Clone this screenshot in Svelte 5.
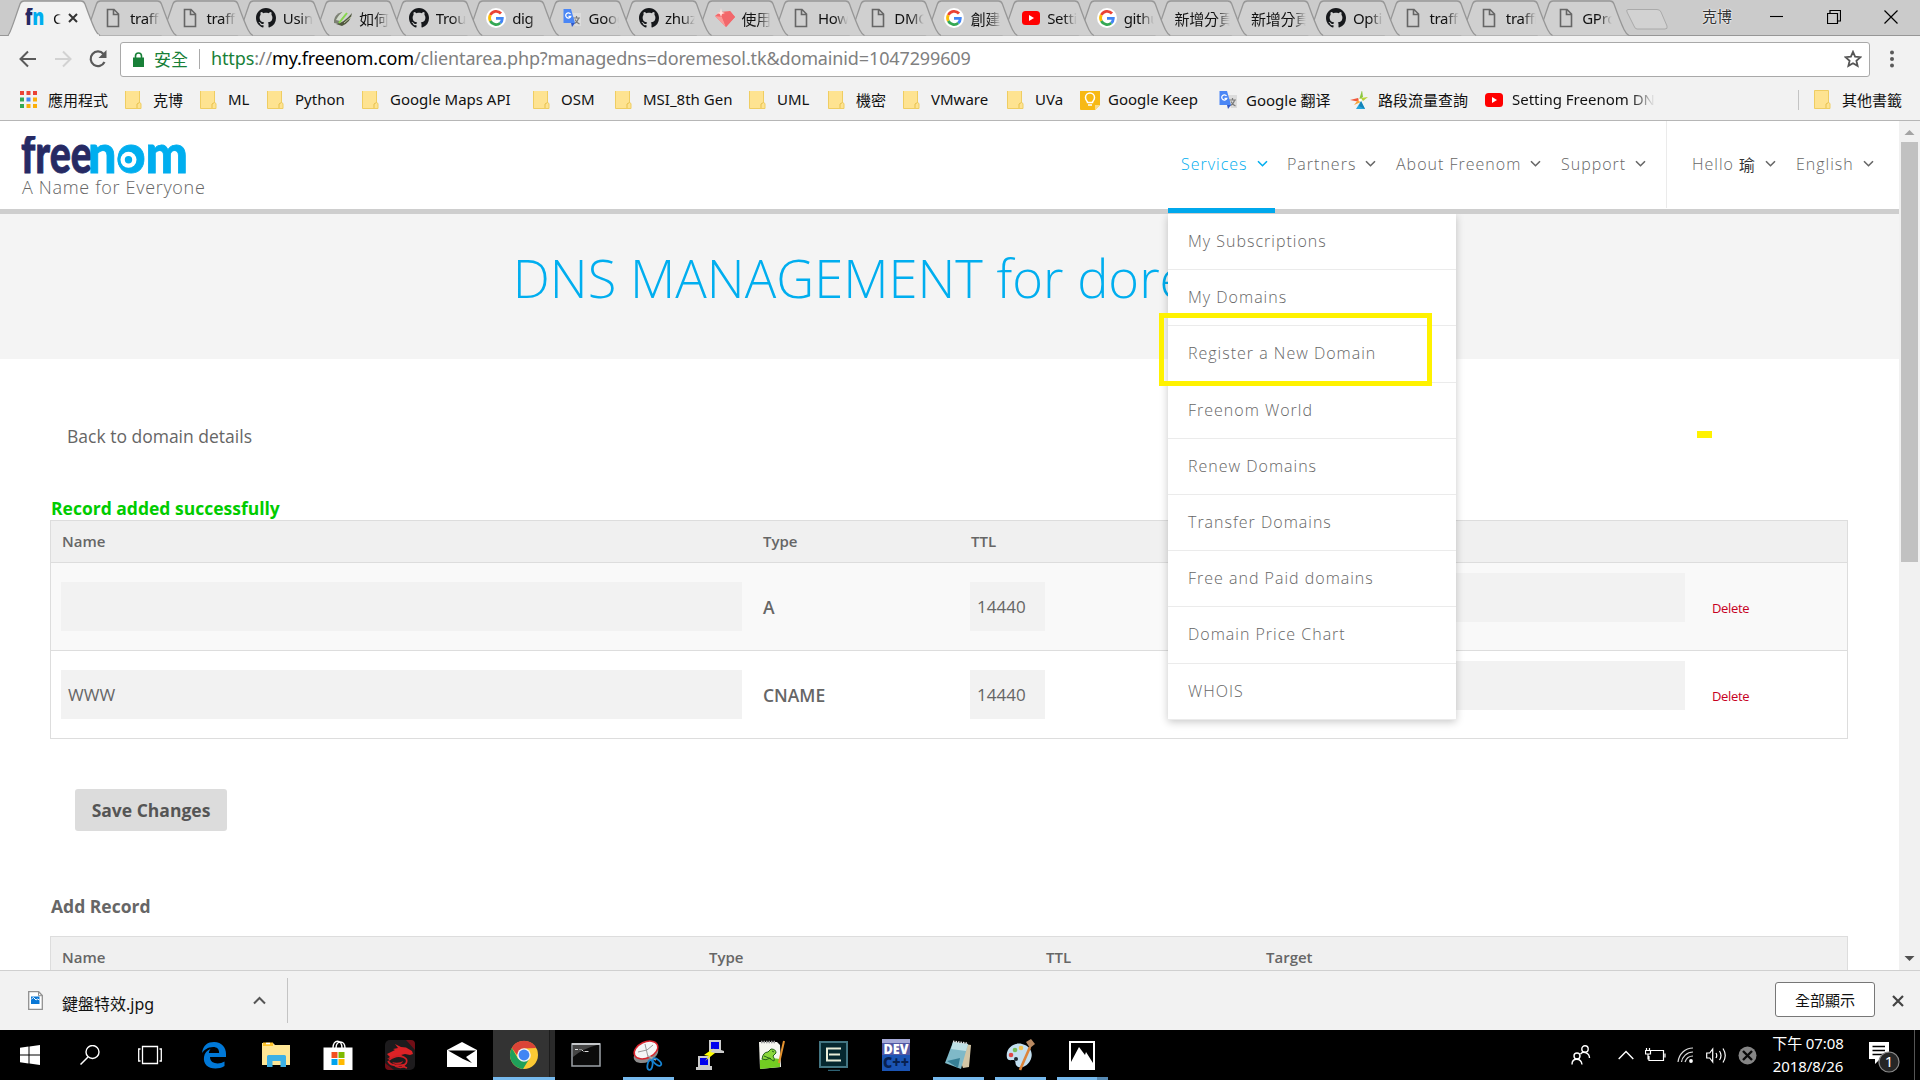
<script>
  const tabPitch = 76.45;
  const tabs = [
    { icon: 'fn', text: 'C' },
    { icon: 'page', text: 'traffic' },
    { icon: 'page', text: 'traffic' },
    { icon: 'github', text: 'Using' },
    { icon: 'leaf', text: '如何在' },
    { icon: 'github', text: 'Troub' },
    { icon: 'google', text: 'dig' },
    { icon: 'translate', text: 'Goog' },
    { icon: 'github', text: 'zhuz' },
    { icon: 'gem', text: '使用' },
    { icon: 'page', text: 'How' },
    { icon: 'page', text: 'DMC' },
    { icon: 'google', text: '創建' },
    { icon: 'youtube', text: 'Setti' },
    { icon: 'google', text: 'githu' },
    { icon: '', text: '新增分頁' },
    { icon: '', text: '新增分頁' },
    { icon: 'github', text: 'Opti' },
    { icon: 'page', text: 'traffic' },
    { icon: 'page', text: 'traffic' },
    { icon: 'page', text: 'GPro' }
  ];

  const bookmarks = [
    { icon: 'apps', text: '應用程式', w: 105 },
    { icon: 'folder', text: '克博', w: 75 },
    { icon: 'folder', text: 'ML', w: 67 },
    { icon: 'folder', text: 'Python', w: 95 },
    { icon: 'folder', text: 'Google Maps API', w: 171 },
    { icon: 'folder', text: 'OSM', w: 82 },
    { icon: 'folder', text: 'MSI_8th Gen', w: 134 },
    { icon: 'folder', text: 'UML', w: 79 },
    { icon: 'folder', text: '機密', w: 75 },
    { icon: 'folder', text: 'VMware', w: 104 },
    { icon: 'folder', text: 'UVa', w: 73 },
    { icon: 'keep', text: 'Google Keep', w: 138 },
    { icon: 'translate', text: 'Google 翻译', w: 132 },
    { icon: 'star4', text: '路段流量查詢', w: 134 },
    { icon: 'youtube', text: 'Setting Freenom DNS', w: 173 }
  ];

  const nav = [
    { text: 'Services', w: 106, on: true },
    { text: 'Partners', w: 109 },
    { text: 'About Freenom', w: 165 },
    { text: 'Support', w: 105 }
  ];

  const menu = [
    'My Subscriptions', 'My Domains', 'Register a New Domain', 'Freenom World',
    'Renew Domains', 'Transfer Domains', 'Free and Paid domains', 'Domain Price Chart', 'WHOIS'
  ];

  const records = [
    { name: '', type: 'A', ttl: '14440' },
    { name: 'WWW', type: 'CNAME', ttl: '14440' }
  ];

  const apps = [
    { icon: 'edge' }, { icon: 'explorer' }, { icon: 'store' }, { icon: 'dragon' }, { icon: 'mail' },
    { icon: 'chrome', active: true }, { icon: 'cmd' }, { icon: 'snip', run: true }, { icon: 'putty' },
    { icon: 'npp' }, { icon: 'easy' }, { icon: 'dev' }, { icon: 'notepad', run: true },
    { icon: 'paint', run: true }, { icon: 'photos', run: true }
  ];
</script>

{#snippet icon(name)}
  {#if name === 'fn'}
    <svg width="20" height="20" viewBox="0 0 20 20"><text class="fn" x="0" y="17" font-size="22" textLength="19" lengthAdjust="spacingAndGlyphs"><tspan fill="#262a64">f</tspan><tspan fill="#00aeef">n</tspan></text></svg>
  {:else if name === 'page'}
    <svg width="20" height="20" viewBox="0 0 20 20"><path d="M4.500 1.500h6.500l4.500 4.500v12.500h-11zM10.500 1.500v5h5" fill="none" stroke="#666" stroke-width="1.600" /></svg>
  {:else if name === 'github'}
    <svg width="20" height="20" viewBox="0 0 16 16"><path fill="#16181b" d="M8 0C3.580 0 0 3.580 0 8c0 3.540 2.290 6.530 5.470 7.590.4.070.55-.17.55-.38 0-.19-.01-.82-.01-1.490-2.010.37-2.530-.49-2.690-.94-.09-.23-.48-.94-.82-1.130-.28-.15-.68-.52-.01-.53.63-.01 1.080.58 1.230.82.72 1.210 1.870.87 2.330.66.07-.52.28-.87.51-1.070-1.780-.2-3.640-.89-3.640-3.950 0-.87.31-1.590.82-2.150-.08-.2-.36-1.020.08-2.120 0 0 .67-.21 2.200.82.64-.18 1.320-.27 2-.27s1.360.09 2 .27c1.530-1.040 2.200-.82 2.200-.82.44 1.100.16 1.920.08 2.120.51.56.82 1.270.82 2.150 0 3.070-1.870 3.750-3.650 3.950.29.25.54.73.54 1.480 0 1.070-.01 1.930-.01 2.200 0 .21.15.46.55.38A8.010 8.010 0 0 0 16 8c0-4.420-3.580-8-8-8z" /></svg>
  {:else if name === 'google'}
    <svg width="20" height="20" viewBox="0 0 20 20"><circle cx="10" cy="10" r="10" fill="#fff" /><g fill="none" stroke-width="2.800"><path d="M15 5.500A6.500 6.500 0 0 0 4.300 7" stroke="#ea4335" /><path d="M4.300 7a6.500 6.500 0 0 0 0 6" stroke="#fbbc05" /><path d="M4.300 13a6.500 6.500 0 0 0 10 2" stroke="#34a853" /><path d="M14.300 15a6.500 6.500 0 0 0 2-4.600H10" stroke="#4285f4" /></g></svg>
  {:else if name === 'translate'}
    <svg width="20" height="20" viewBox="0 0 20 20"><path d="M8 5h11v13h-6z" fill="#dcdcdc" /><path d="M11 10h7M14.500 8v2m2 0c-.5 3-2 4.500-4 5.500m.5-4c1 2 2.500 3.500 4.500 4.500" stroke="#7a7a7a" stroke-width="1.200" fill="none" /><path d="M1.500 1H9l4 14H1.500z" fill="#4a86f5" /><path d="M9 15h4l-3 4z" fill="#2f58c8" /><path d="M8.500 6a2.600 2.600 0 1 0 .3 2.300H6.500" fill="none" stroke="#fff" stroke-width="1.300" /></svg>
  {:else if name === 'leaf'}
    <svg width="20" height="20" viewBox="0 0 20 20"><path d="M1 12Q2 6 9 4l3 3-6 9-5-1z" fill="#7c8174" /><path d="M3 12Q6 6 11 3l2 2-6 8z" fill="#d3dccb" /><path d="M3 16Q11 15 19 5Q18 14 9 18Z" fill="#50573f" /><path d="M6 15L14 5" stroke="#86d84a" stroke-width="2" /><path d="M11 15l7-6" stroke="#b9c49f" /></svg>
  {:else if name === 'gem'}
    <svg width="20" height="20" viewBox="0 0 20 20"><path d="M0 8l5-4 10-1 5 6-9 10z" fill="#f4696b" /><path d="M0 8l7 1 4 10z" fill="#fa9a98" /><path d="M7 9l8-6 5 6-9 10z" fill="#f2676b" /><path d="M6 0l1 4 3 1-3 1-1 3-1-3-3-1 3-1z" fill="#ffe0dd" /></svg>
  {:else if name === 'youtube'}
    <svg width="20" height="20" viewBox="0 0 20 20"><rect x="1" y="3" width="18" height="14" rx="3.500" fill="#f00" /><path d="M8 7v6l5-3z" fill="#fff" /></svg>
  {:else if name === 'apps'}
    <svg width="17" height="17" viewBox="0 0 17 17"><path fill="#ea4335" d="M0 0h4v4H0zM6.500 0h4v4h-4zM13 0h4v4h-4z" /><path fill="#34a853" d="M0 6.500h4v4H0zM0 13h4v4H0z" /><path fill="#4285f4" d="M6.500 6.500h4v4h-4z" /><path fill="#fbaf0a" d="M13 6.500h4v4h-4zM6.500 13h4v4h-4zM13 13h4v4h-4z" /></svg>
  {:else if name === 'folder'}
    <svg width="17" height="19" viewBox="0 0 17 19"><path d="M.5.500h14v12l1.500 1V18.500H.5z" fill="#fee391" stroke="#efcd62" /><path d="M12 18v-4l2.500-1.500" fill="none" stroke="#e7c14c" /></svg>
  {:else if name === 'keep'}
    <svg width="20" height="20" viewBox="0 0 20 20"><path d="M0 1q0-1 1-1h18q1 0 1 1v14l-5 5H1q-1 0-1-1z" fill="#f7b914" /><path d="M15 20v-5h5z" fill="#fbdc85" /><path d="M7.500 12.500c0-1.500-2-2-2-5a4.500 4.500 0 0 1 9 0c0 3-2 3.500-2 5zM8 15h4" fill="none" stroke="#fff" stroke-width="1.500" /></svg>
  {:else if name === 'star4'}
    <svg width="20" height="20" viewBox="0 0 20 20"><path d="M12 0l1 7-4 3z" fill="#8cc63f" /><path d="M18 7l-5 4-2-3z" fill="#b7d334" /><path d="M0 10l8-2 2 4z" fill="#f05a3c" /><path d="M4 15l4-5 3 2z" fill="#f7a43a" /><path d="M15 19H6l5-8z" fill="#25a5dc" /><path d="M9 16l2-5 4 8z" fill="#1583b8" /><circle cx="10" cy="10" r="1.500" fill="#fff" /></svg>
  {/if}
{/snippet}

{#snippet chevron()}
  <svg class="chev" width="11" height="8" viewBox="0 0 11 8"><path d="M1 1.200l4.500 4.500L10 1.200" fill="none" stroke="currentColor" stroke-width="1.600" /></svg>
{/snippet}

{#snippet app(name)}
  <svg width="32" height="32" viewBox="0 0 32 32">
    {#if name === 'edge'}
      <path fill="#0078d7" d="M4 14C5 6 10 3 16 3c8 0 12 6 12 12v3H12c0 7 9 8 14.500 4.500V27c-3 1.800-6 2.500-9 2.500C10 29.500 5 25 6 18c.5-4 3-6.500 6.500-8-1 1.300-1.500 2.500-1.600 4h10.200c0-4-2-6-6-6C10 8 6 11 4 14z" />
    {:else if name === 'explorer'}
      <path d="M2 4h11l2 2h15v20H2z" fill="#ffe695" /><path d="M3 3.500h10V7H3z" fill="#ffc52b" /><path d="M6 4.500h4" stroke="#fff" stroke-width="1.500" /><path d="M7 28V17.500q0-1.500 1.500-1.500h16q1.500 0 1.500 1.500V28h-5.500v-6h-8v6z" fill="#3db1e6" />
    {:else if name === 'store'}
      <path d="M11 9C11 0 20 0 20 9M14 9C14 1 23 1 23 9" fill="none" stroke="#fff" stroke-width="1.500" /><path d="M1.500 8.500h29V31h-29z" fill="#fff" /><path d="M9.500 13h6v6h-6z" fill="#f25022" /><path d="M16.500 13h6v6h-6z" fill="#7fba00" /><path d="M9.500 20h6v6h-6z" fill="#00a4ef" /><path d="M16.500 20h6v6h-6z" fill="#ffb900" />
    {:else if name === 'dragon'}
      <rect x="1" y="1" width="30" height="30" rx="5" fill="#1d1b1d" /><path d="M22 1h5q4 0 4 4v6zM1 24v3q0 4 4 4h5z" fill="#710e16" />
      <path d="M3 15l8-4-2-1 5-1-3-4 6 3 5 .5 6 3.500 1 3-3 1-5-1-4 1 4 2-8-1-5 2-5 1 3-2z" fill="#dc2226" />
      <path d="M5 21c4-3 9-5 14-3 6 2 4 8-1 8-6 1-12 0-14-4M9 25c3 4 9 4 12 2M18 27l5 2" fill="none" stroke="#d02025" stroke-width="1.700" /><path d="M8 23c4 1 8 1 11-1-1 4-6 5-11 1z" fill="#c31d23" />
    {:else if name === 'mail'}
      <path d="M1 11L16 3l15 8v17H1z" fill="#fff" /><path d="M2 11.500h28L20 18l6 6-9-4z" fill="#000" />
    {:else if name === 'chrome'}
      <circle cx="16" cy="16" r="14" fill="#fcc934" /><path d="M3.800 9A14 14 0 0 1 28.200 9L16 9.500 9 16z" fill="#db4437" /><path d="M3.800 9A14 14 0 0 0 15 30L21.500 19.500 10 19.500z" fill="#1fa05a" /><circle cx="16" cy="16" r="6.800" fill="#f3f3f3" /><circle cx="16" cy="16" r="5.400" fill="#4285f4" />
    {:else if name === 'cmd'}
      <rect x="2" y="5" width="28" height="22" fill="#0b0b0b" stroke="#9da3a8" stroke-width="1.500" /><path d="M3 6h24Q12 10 3 18z" fill="#454545" /><path d="M2 5h28" stroke="#c4c7ca" stroke-width="2" /><path d="M5 10.500h3m1.500 0h1m1 0l2 2m1 0h4" stroke="#ddd" />
    {:else if name === 'snip'}
      <ellipse cx="14" cy="15" rx="13" ry="8" transform="rotate(-25 14 15)" fill="#8c8c8c" /><ellipse cx="14" cy="11" rx="12.500" ry="8" transform="rotate(-25 14 11)" fill="#f6f6f6" stroke="#d8242c" stroke-width="1.500" /><path d="M13 5l3 13M6 13l9-2 6-5" stroke="#999" fill="none" /><path d="M16 17l8 4" stroke="#aaa" stroke-width="1.500" /><ellipse cx="18" cy="26" rx="2.500" ry="5" transform="rotate(10 18 26)" fill="none" stroke="#1683d2" stroke-width="1.800" /><ellipse cx="25" cy="23" rx="5" ry="2.500" transform="rotate(40 25 23)" fill="none" stroke="#1683d2" stroke-width="1.800" />
    {:else if name === 'putty'}
      <path d="M15 1h12v10l3 1v2H15z" fill="#ccc" /><path d="M17 3h8v7h-8z" fill="#00e" /><path d="M4 17h12v10h2v4H2v-3h2z" fill="#ccc" /><path d="M6 19h8v7H6z" fill="#00e" /><path d="M20 9l-10 7 5 1-4 5 10-8-5-1z" fill="#ff0" />
    {:else if name === 'npp'}
      <path d="M3 3h18l3 3 1 22-21 2z" fill="#f6f7f0" /><path d="M5 3h15" stroke="#999" stroke-width="2.500" stroke-dasharray="1.500 1" /><path d="M4 21q10-3 20-1v8L4 30z" fill="#72cc22" /><path d="M6 20q1-7 6-7l3-3q5 0 5 4l-3 3q2 3 1 5-3-1-4-3-4 3-8 1z" fill="#8bd83a" stroke="#26641a" /><path d="M8 17l7 3M16 12l2 1" stroke="#26641a" /><path d="M28 2l-5 22" stroke="#e6932e" stroke-width="2" />
    {:else if name === 'easy'}
      <rect x="2" y="3" width="27" height="25" fill="#05272f" stroke="#437582" stroke-width="2" /><path d="M23 9.500H9v12h14M11 15.500h11" fill="none" stroke="#e8ecd8" stroke-width="2" /><path d="M10 31.500h12" stroke="#2e6273" stroke-width="1.500" />
    {:else if name === 'dev'}
      <rect x="2" y="0" width="28" height="32" fill="#1b54b4" /><path d="M2 0h28v5H2z" fill="#a5a9d8" /><path d="M2 4h28v12H2z" fill="#5258a4" /><text class="dev" x="3.500" y="15" font-size="14" textLength="25" lengthAdjust="spacingAndGlyphs" fill="#fff">DEV</text><text class="dev" x="3" y="29" font-size="15" textLength="26" lengthAdjust="spacingAndGlyphs" fill="#08204f">C++</text>
    {:else if name === 'notepad'}
      <path d="M11 3l18 3-2 22-6 1z" fill="#d2c5a5" /><path d="M11 3l15 2-7 25L3 24z" fill="#7fb9c8" /><path d="M11 3l15 2-2 7-15-2z" fill="#bfe0e6" /><path d="M11 2.500l15 2" stroke="#ddd" stroke-width="2" stroke-dasharray="1.500 1" /><path d="M5 22l13-3-2 10z" fill="#377f95" />
    {:else if name === 'paint'}
      <path d="M3 19C1 9 10 3 18 5c9 2 12 10 8 17-4 7-12 8-14 4-1-3 0-5-3-5-2 0-5 1-6-2z" fill="#c3dff0" /><circle cx="7" cy="16" r="2.300" fill="#df4747" /><circle cx="11" cy="11" r="2.300" fill="#79bd5b" /><circle cx="17" cy="9" r="2.300" fill="#f4c24f" /><circle cx="12" cy="20" r="2" fill="#202b33" /><path d="M26 8L16 31" stroke="#dd843a" stroke-width="2.600" /><path d="M22 3l5-3 4 5-5 4z" fill="#b98a62" />
    {:else if name === 'photos'}
      <path d="M3 2h26v29H3z" fill="#fff" /><path d="M5 23L13 8l6 8 1-3 7 11V4H5z" fill="#000" />
    {/if}
  </svg>
{/snippet}

<div class="screen">
  <header class="tabstrip">
    <svg class="shapes" width="1920" height="36" viewBox="0 0 1920 36">
      <path d="M0 35.500H1920" stroke="#979797" />
      {#each tabs.map((_, i) => tabs.length - 1 - i) as i}
        <path
          transform="translate({i * tabPitch} 0)"
          d="M8 35.500C10 34 11 30 20 4Q21 1 24 1H81Q84 1 85 4C95 32 97 34 100 35.500"
          fill={i ? '#d0d0d0' : '#f2f2f2'} stroke="#979797" stroke-width="1.300" />
      {/each}
      <path d="M9 35.500H99" stroke="#f2f2f2" stroke-width="2" />
      <path d="M1628 9.500H1657Q1660 9.500 1661 12L1667 26Q1668 29 1665 29H1637Q1635 29 1634 26L1627 12Q1626 9.500 1628 9.500Z" fill="#d2d2d2" stroke="#aaa" />
    </svg>
    <div class="tabs">
      {#each tabs as t, i}
        <div class="tab" class:bare={!t.icon} class:first={i === 0}>
          {#if t.icon}{@render icon(t.icon)}{/if}
          <span>{t.text}</span>
          {#if i === 0}<svg width="10" height="10" viewBox="0 0 10 10"><path d="M1 1l8 8M9 1L1 9" stroke="#333" stroke-width="2" /></svg>{/if}
        </div>
      {/each}
    </div>
    <div class="window">
      <span>克博</span>
      <svg width="14" height="14" viewBox="0 0 14 14"><path d="M0 6.500h13" stroke="#000" stroke-width="1.100" /></svg>
      <svg width="14" height="14" viewBox="0 0 14 14"><path d="M.5 3.500h10v10H.5zM3 3V.5h10.500V11H11" fill="none" stroke="#000" stroke-width="1.200" /></svg>
      <svg width="14" height="14" viewBox="0 0 14 14"><path d="M.5.500l13 13M13.500.500l-13 13" stroke="#000" stroke-width="1.200" /></svg>
    </div>
  </header>

  <div class="toolbar">
    <svg width="18" height="18" viewBox="0 0 18 18"><path d="M17 9H2M9 1.500L1.500 9 9 16.500" fill="none" stroke="#5a5a5a" stroke-width="2" /></svg>
    <svg width="18" height="18" viewBox="0 0 18 18"><path d="M1 9h15M9 1.500L16.500 9 9 16.500" fill="none" stroke="#d2d2d2" stroke-width="2" /></svg>
    <svg width="18" height="18" viewBox="0 0 18 18"><path d="M15.500 12A7.300 7.300 0 1 1 14.500 4" fill="none" stroke="#5a5a5a" stroke-width="2.200" /><path d="M17.500 0v8h-8z" fill="#5a5a5a" /></svg>
    <div class="omnibox">
      <svg width="11" height="15" viewBox="0 0 11 15"><path d="M0 5.500h11V15H0z" fill="#188038" /><path d="M2.500 6V4a3 3 0 0 1 6 0v2" fill="none" stroke="#188038" stroke-width="1.600" /></svg>
      <span class="secure">安全</span>
      <span class="url"><b>https</b>://<i>my.freenom.com</i>/clientarea.php?managedns=doremesol.tk&amp;domainid=1047299609</span>
      <svg width="18" height="18" viewBox="0 0 18 18"><path d="M9 1.800l2.100 4.900 5.300.5-4 3.500 1.200 5.200L9 13.200l-4.600 2.700 1.200-5.200-4-3.500 5.300-.5z" fill="none" stroke="#555" stroke-width="1.800" /></svg>
    </div>
    <svg width="6" height="18" viewBox="0 0 6 18"><g fill="#5a5a5a"><circle cx="3" cy="2.500" r="2" /><circle cx="3" cy="9" r="2" /><circle cx="3" cy="15.500" r="2" /></g></svg>
  </div>

  <div class="bookmarks">
    {#each bookmarks as b, i}
      <div class="bm" class:fade={i === bookmarks.length - 1} style="width: {b.w}px">
        <span class="ico">{@render icon(b.icon)}</span><span class="label">{b.text}</span>
      </div>
    {/each}
    <div class="bm other"><span class="ico">{@render icon('folder')}</span><span class="label">其他書籤</span></div>
  </div>

  <div class="viewport">
    <div class="page">
      <div class="site">
        <div class="brand">
          <svg width="170" height="40" viewBox="0 0 170 40"><text class="logo" x="0" y="37" font-size="53" textLength="71" lengthAdjust="spacingAndGlyphs" fill="#262a64" stroke="#262a64">free</text><text class="logo" x="67" y="37" font-size="53" textLength="100" lengthAdjust="spacingAndGlyphs" fill="#00aeef" stroke="#00aeef">nom</text><circle cx="107.500" cy="23.800" r="11" fill="#00aeef" /><circle cx="107.500" cy="23.800" r="8" fill="#fff" /><circle cx="107.500" cy="23.800" r="3.700" fill="#00aeef" /></svg>
          <p>A Name for Everyone</p>
        </div>
        <nav>
          {#each nav as n}
            <a class:on={n.on} style="width: {n.w}px">{n.text}{@render chevron()}</a>
          {/each}
          <div class="account">
            <a class="hello">Hello <em>瑜</em>{@render chevron()}</a>
            <a>English{@render chevron()}</a>
          </div>
        </nav>
      </div>
      <div class="hero"><h1>DNS MANAGEMENT for doremesol.tk</h1></div>

      <main>
        <a class="back">Back to domain details</a>
        <p class="success">Record added successfully</p>
        <div class="table">
          <div class="row head"><span>Name</span><span>Type</span><span>TTL</span><span>Target</span><span></span></div>
          {#each records as r, i}
            <div class="row" class:odd={i === 0}>
              <span class="field">{r.name}</span>
              <strong>{r.type}</strong>
              <span class="field">{r.ttl}</span>
              <span class="field target"></span>
              <a class="delete">Delete</a>
            </div>
          {/each}
        </div>
        <button class="save">Save Changes</button>
        <h2>Add Record</h2>
        <div class="table add">
          <div class="row head"><span>Name</span><span>Type</span><span>TTL</span><span>Target</span></div>
        </div>
      </main>

      <div class="dropdown">
        <div class="bar"></div>
        <ul>
          {#each menu as m}<li>{m}</li>{/each}
        </ul>
      </div>
      <div class="highlight"></div>
      <div class="mark"></div>
    </div>
    <div class="scrollbar">
      <svg width="21" height="21" viewBox="0 0 21 21"><path d="M5.500 14l5-5 5 5z" fill="#a3a3a3" /></svg>
      <div class="thumb"></div>
      <svg width="21" height="21" viewBox="0 0 21 21"><path d="M5.500 7l5 5 5-5z" fill="#505050" /></svg>
    </div>
  </div>

  <div class="downloads">
    <svg width="15" height="19" viewBox="0 0 15 19"><path d="M.7.700h10L14.300 4.500V18.300H.7z" fill="#fff" stroke="#909090" stroke-width="1.300" /><path d="M10.500.700v4h4" fill="none" stroke="#909090" /><path d="M3 5.500h8.500V13H3z" fill="#0a78d6" /><path d="M3.500 8l2-1.500L8 9l1.500-1 2 1" stroke="#fff" fill="none" /></svg>
    <span class="file">鍵盤特效.jpg</span>
    <svg width="13" height="9" viewBox="0 0 13 9"><path d="M1 7.500L6.500 2 12 7.500" fill="none" stroke="#555" stroke-width="2" /></svg>
    <div class="rule"></div>
    <button>全部顯示</button>
    <svg width="12" height="12" viewBox="0 0 12 12"><path d="M1 1l10 10M11 1L1 11" stroke="#444" stroke-width="2.200" /></svg>
  </div>

  <footer class="taskbar">
    <div class="sys"><svg width="20" height="20" viewBox="0 0 20 20"><path d="M0 2.800L8.500 1.600V9.500H0zM9.500 1.400L20 0v9.500H9.500zM0 10.500h8.500v7.900L0 17.200zM9.500 10.500H20V20L9.500 18.600z" fill="#fff" /></svg></div>
    <div class="sys"><svg width="20" height="20" viewBox="0 0 20 20"><circle cx="12.500" cy="7" r="6.500" fill="none" stroke="#fff" stroke-width="1.400" /><path d="M8 12L.5 19.500" stroke="#fff" stroke-width="1.500" /></svg></div>
    <div class="sys"><svg width="24" height="20" viewBox="0 0 24 20"><path d="M4.500 1.500h15v17h-15zM2.500 4H.7v12h1.800M21.500 4h1.800v12h-1.800" fill="none" stroke="#fff" stroke-width="1.300" /></svg></div>
    <div class="apps">
      {#each apps as a}
        <div class="app" class:active={a.active} class:run={a.run} class:multi={a.icon === 'photos'}>{@render app(a.icon)}</div>
      {/each}
    </div>
    <div class="tray">
      <svg width="20" height="20" viewBox="0 0 20 20"><g fill="none" stroke="#fff" stroke-width="1.400"><circle cx="14" cy="4" r="3.200" /><circle cx="6" cy="11" r="3" /><path d="M1 19.500c0-7 9-7 10 0M9.500 9c3-3.500 9-1 9 4" /></g></svg>
      <svg class="up" width="16" height="10" viewBox="0 0 16 10"><path d="M.7 9L8 1.500 15.300 9" fill="none" stroke="#fff" stroke-width="1.400" /></svg>
      <svg width="21" height="16" viewBox="0 0 21 16"><path d="M6 3.500h12.500v10H4V9M20 6.500v4M1.500 1v3M4.500 1v3M.5 3.500h5V7h-5zM3 7v5.500" fill="none" stroke="#fff" stroke-width="1.200" /></svg>
      <svg width="18" height="16" viewBox="0 0 18 16"><g fill="none" stroke="#ddd" stroke-width="1.200"><path d="M1 15C2 7 8 1 16 1M4.500 15C5 10 10 5 16 5M8 15c1-3 4-6 8-6" /></g><circle cx="14" cy="14" r="1.900" fill="#fff" /></svg>
      <svg width="21" height="17" viewBox="0 0 21 17"><path d="M.7 6h3l3-4v13l-3-4h-3zM10 6q1.500 2.500 0 5M13.500 4q3 4.500 0 9M17 1.500q4.500 7 0 14" fill="none" stroke="#fff" stroke-width="1.200" /></svg>
      <svg width="19" height="19" viewBox="0 0 19 19"><circle cx="9.500" cy="9.500" r="9" fill="#858585" /><path d="M5 5l9 9M14 5l-9 9" stroke="#0a0a0a" stroke-width="2.400" /></svg>
    </div>
    <div class="clock"><span>下午 07:08</span><span>2018/8/26</span></div>
    <svg class="action" width="32" height="32" viewBox="0 0 32 32"><path d="M1 1h20v17h-9l-5 5v-5H1z" fill="#fff" /><path d="M4.500 5.500h12.500M4.500 9.500h12.500M4.500 13.500h12.500" stroke="#000" stroke-width="1.300" /><circle cx="21" cy="21" r="10" fill="#262626" stroke="#8a8a8a" stroke-width="1.200" /><text class="cnt" x="21" y="26" text-anchor="middle" fill="#fff">1</text></svg>
    <div class="peek"></div>
  </footer>
</div>

<style>
  :global(body) { margin: 0; overflow: hidden; }
  * { box-sizing: border-box; }
  svg { display: block; flex: none; }
  p, h1, h2, ul { margin: 0; padding: 0; }
  .screen { width: 1920px; height: 1080px; display: flex; flex-direction: column; overflow: hidden; font-family: "Open Sans", "Noto Sans CJK TC", sans-serif; color: #666; background: #fff; white-space: nowrap; }

  .tabstrip { height: 36px; display: grid; background: #cbcbcb; flex: none; }
  .tabstrip > * { grid-area: 1 / 1; }
  .tabs { display: flex; padding-left: 27px; color: #111; font: 15px "Noto Sans", "Noto Sans CJK TC", sans-serif; letter-spacing: -.3px; }
  .tab { width: 76.45px; height: 36px; display: flex; align-items: center; gap: 6.500px; flex: none; }
  .tab span { width: 30px; overflow: hidden; -webkit-mask: linear-gradient(90deg, #000 55%, transparent); mask: linear-gradient(90deg, #000 55%, transparent); }
  .tab.bare span { width: 56px; padding-left: 1px; -webkit-mask: linear-gradient(90deg, #000 75%, transparent); mask: linear-gradient(90deg, #000 75%, transparent); }
  .tab.first svg:first-child { margin-left: -2px; }
  .tab.first { gap: 8px; }
  .tab.first span { width: 8px; margin-right: -1px; }
  .window { justify-self: end; display: flex; align-items: center; height: 33px; padding-right: 22px; gap: 43px; font: 15px "Noto Sans CJK TC", sans-serif; color: #333; }
  .window span { text-shadow: 0 0 2px #fff, 0 0 2px #fff; margin-right: -5px; margin-top: -2px; }

  .toolbar { height: 44px; flex: none; display: flex; align-items: center; gap: 17px; padding: 2px 22px 0 19px; background: #f2f2f2; }
  .omnibox { width: 1750px; height: 35px; margin-left: -4px; margin-right: 2px; background: #fff; border: 1px solid #a9a9a9; border-radius: 3px; display: flex; align-items: center; padding: 0 7px 0 12px; }
  .secure { width: 46px; margin-left: 10px; border-right: 1px solid #aaa; font: 17px/20px "Noto Sans CJK TC", sans-serif; color: #188038; }
  .url { flex: 1; margin: -2px 0 0 11px; font: 18px "Noto Sans", sans-serif; letter-spacing: -.130px; color: #808080; }
  .url b { font-weight: 400; color: #188038; }
  .url i { font-style: normal; color: #000; }

  .bookmarks { height: 41px; flex: none; display: flex; align-items: center; padding: 0 18px 0 20px; background: #f2f2f2; border-bottom: 1px solid #b6b6b6; color: #111; font: 15px "Noto Sans", "Noto Sans CJK TC", sans-serif; }
  .bm { display: flex; align-items: center; flex: none; overflow: hidden; }
  .label { margin-top: -2px; }
  .ico { width: 28px; flex: none; margin-top: -1px; }
  .fade { -webkit-mask: linear-gradient(90deg, #000 85%, transparent 99%); mask: linear-gradient(90deg, #000 85%, transparent 99%); }
  .other { margin-left: auto; border-left: 1px solid #c4c4c4; padding-left: 15px; height: 20px; overflow: visible; }

  .viewport { height: 849px; flex: none; display: flex; overflow: hidden; }
  .page { width: 1899px; height: 849px; position: relative; overflow: hidden; }
  .site { height: 93px; border-bottom: 5px solid #cecece; display: flex; justify-content: space-between; }
  .brand { padding: 15px 0 0 21px; }
  .logo { font-family: Lato, sans-serif; font-weight: 900; stroke-width: .8px; }
  .brand p { font-size: 18px; font-weight: 300; line-height: 22px; letter-spacing: .68px; margin-left: 1px; }
  nav { display: flex; font-size: 16px; font-weight: 300; letter-spacing: 1px; line-height: 85px; height: 86px; }
  nav a { display: flex; align-items: center; }
  nav .on { color: #00aeef; }
  .chev { margin-left: 9px; }
  .account { display: flex; border-left: 1px solid #ebebeb; padding-left: 25px; width: 233px; height: 87px; }
  .account a { width: 104px; height: 86px; flex: none; }
  em { font-style: normal; font-weight: 400; margin: 3px 1px 0 5px; letter-spacing: 0; color: #333; }
  .hero { height: 145px; background: #f4f4f4; text-align: center; }
  h1 { font-size: 52.500px; font-weight: 300; line-height: 128px; color: #00aeef; }

  main { padding: 64px 51px 0 50px; display: flex; flex-direction: column; align-items: flex-start; }
  .back { font-size: 17.500px; line-height: 26px; margin-left: 17px; }
  .success { font-size: 17.500px; font-weight: 700; line-height: 26px; color: #0c0; margin: 46px 0 -1px 1px; }
  .table { width: 1798px; border: 1px solid #ddd; }
  .row { display: grid; grid-template-columns: 701px 208px 221px 504px 1fr; height: 88px; padding-left: 10px; align-items: center; border-top: 1px solid #ddd; }
  .row.head { height: 41px; border: 0; background: #f0f0f0; font-size: 15px; font-weight: 600; padding-bottom: 2px; }
  .head span, strong { margin-left: 1px; }
  .odd { background: #f9f9f9; }
  .field { height: 49px; width: 681px; background: #f2f2f2; font-size: 17px; line-height: 49px; padding-left: 7px; }
  strong + .field { width: 75px; }
  .field.target { width: 494px; align-self: start; margin-top: 10px; }
  strong { font-size: 17.500px; font-weight: 600; }
  .delete { font-size: 13px; letter-spacing: -.35px; color: #c7001e; padding: 2px 0 0 17px; }
  .save { margin: 50px 0 0 25px; width: 152px; height: 42px; border: 0; border-radius: 3px; background: #dcdcdc; font: 700 17.500px "Open Sans", sans-serif; color: #555; padding: 0; }
  h2 { font-size: 17.500px; font-weight: 700; line-height: 26px; margin: 62px 0 17px 1px; }
  .add .row { grid-template-columns: 647px 337px 220px 1fr; }

  .dropdown { position: absolute; left: 1168px; top: 87px; width: 288px; }
  .bar { width: 107px; height: 6px; background: #00a8ec; border-bottom: 1px solid #cecece; }
  .dropdown ul { list-style: none; background: #fff; box-shadow: 0 2px 8px rgba(0, 0, 0, .22); clip-path: inset(0 -12px -12px); }
  .dropdown li { height: 56.200px; padding-left: 20px; border-bottom: 1px solid #ebebeb; font-size: 16px; font-weight: 300; letter-spacing: 1px; line-height: 54px; }
  .highlight { position: absolute; left: 1159px; top: 192px; width: 273px; height: 73px; border: 5px solid #fff200; }
  .mark { position: absolute; left: 1697px; top: 310px; width: 15px; height: 7px; background: #fff200; }

  .scrollbar { width: 21px; background: #f1f1f1; display: flex; flex-direction: column; align-items: center; }
  .thumb { width: 17px; height: 420px; background: #c1c1c1; margin-bottom: auto; }

  .downloads { height: 60px; flex: none; background: #f2f2f2; border-top: 1px solid #d0d0d0; display: flex; align-items: center; padding: 0 16px 0 28px; }
  .file { font: 16px "Noto Sans", "Noto Sans CJK TC", sans-serif; color: #111; width: 191px; margin-left: 19px; padding-top: 4px; }
  .rule { width: 1px; height: 45px; background: #c4c4c4; margin-left: 21px; }
  .downloads button { margin-left: auto; margin-right: 17px; width: 100px; height: 35px; background: #fff; border: 1px solid #777; border-radius: 3px; color: #111; font: 15px "Noto Sans CJK TC", sans-serif; margin-top: -3px; }

  .taskbar { height: 50px; flex: none; display: flex; align-items: center; background: #000; color: #fff; }
  .sys { width: 60px; display: flex; justify-content: center; }
  .apps { display: flex; margin-left: 3px; }
  .app { width: 62px; height: 50px; display: flex; align-items: center; justify-content: center; }
  .active { background: linear-gradient(90deg, #333 56px, #1c1c1c 56px 57px, #2a2a2a 57px); box-shadow: inset 0 -3px #76b9ed; }
  .run { background: linear-gradient(#76b9ed, #76b9ed) center bottom / 51px 3px no-repeat; }
  .run.multi { background-image: linear-gradient(90deg, #76b9ed 40px, #5689b2 40px); }
  .tray { margin-left: auto; display: flex; align-items: center; gap: 11px; }
  .up { margin: 0 0 0 16px; }
  .clock { display: flex; flex-direction: column; align-items: center; width: 76px; margin-left: 13px; font: 15px/23px "Noto Sans", "Noto Sans CJK TC", sans-serif; letter-spacing: -.1px; }
  .clock span:first-child { margin-top: -1px; }
  .action { margin: 4px 14px 0 22px; }
  .peek { width: 6px; height: 50px; border-left: 1px solid #555; }
  .fn, .dev { font-family: "Open Sans", sans-serif; font-weight: 800; }
  .cnt { font: 15px "Noto Sans", sans-serif; }
</style>
